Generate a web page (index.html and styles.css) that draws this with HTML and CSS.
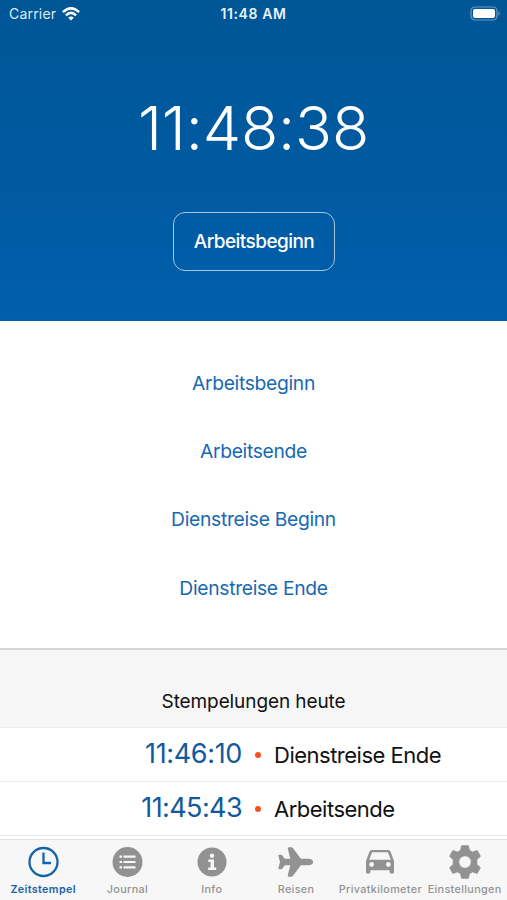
FILE: index.html
```html
<!DOCTYPE html>
<html lang="de">
<head>
<meta charset="utf-8">
<title>Zeitstempel</title>
<link rel="stylesheet" href="styles.css">
</head>
<body>
<div class="app">
  <header class="hero">
    <div class="status">
      <div class="carrier"><span>Carrier</span>
        <svg width="18" height="14" viewBox="0 0 18 14" fill="none" stroke="#fff" stroke-width="2.5"><path d="M.9 5.2Q9-2.5 17.1 5.2M3.9 8.3Q9 3.5 14.1 8.3"/><path d="M6.2 10.8Q9 8.3 11.8 10.8L9 13.6Z" fill="#fff" stroke="none"/></svg>
      </div>
      <div class="status-time">11:48 AM</div>
      <div class="battery"><svg width="31" height="15" viewBox="0 0 31 15"><rect x="1" y="1" width="26" height="13" rx="4" fill="none" stroke="#6699c4" stroke-width="1.2"/><rect x="3" y="3" width="22" height="9" rx="2" fill="#fff"/><path d="M28.500 5Q31 7.500 28.500 10Z" fill="#6699c4"/></svg></div>
    </div>
    <div class="clock">11:48:38</div>
    <button class="start">Arbeitsbeginn</button>
  </header>
  <nav class="actions">
    <a>Arbeitsbeginn</a>
    <a>Arbeitsende</a>
    <a>Dienstreise Beginn</a>
    <a>Dienstreise Ende</a>
  </nav>
  <section class="stamps">
    <h2>Stempelungen heute</h2>
    <div class="row"><time>11:46:10</time><i></i><span class="label">Dienstreise Ende</span></div>
    <div class="row"><time class="wide">11:45:43</time><i></i><span class="label">Arbeitsende</span></div>
  </section>
  <footer class="tabs">
    <div class="tab active"><svg viewBox="0 0 34 34" fill="none" stroke="currentColor" stroke-width="2.3"><circle cx="17.500" cy="17" r="14"/><path d="M17.500 7.500V18H25"/></svg><span>Zeitstempel</span></div>
    <div class="tab"><svg viewBox="0 0 34 34" fill="currentColor"><circle cx="17.500" cy="17" r="15"/><path d="M9.500 11.700h2.500M9.500 17h2.500M9.500 22.300h2.500M13.500 11.700h12M13.500 17h12M13.500 22.300h12" stroke="#f7f7f7" stroke-width="2.200"/></svg><span>Journal</span></div>
    <div class="tab"><svg viewBox="0 0 34 34" fill="currentColor"><circle cx="17" cy="17" r="14.500"/><circle cx="17" cy="10.700" r="2.200" fill="#f7f7f7"/><path d="M13.300 14.500h5.700v8h2.200v2.400h-8v-2.400h2.300v-5.500h-2.200z" fill="#f7f7f7"/></svg><span>Info</span></div>
    <div class="tab"><svg class="plane" viewBox="0 0 36 34" fill="currentColor"><path d="M12.300 13.800 9.800 3.700Q9.400 2.200 10.900 2.200h2.200q1 0 1.700.9l8.100 10.700h7.200q5 .2 5 3.200t-5 3.200h-7.200l-8.100 10.700q-.7.9-1.700.9h-2.200q-1.500 0-1.100-1.500l2.500-10.100H6.800l-2.700 3.500q-.5.6-1.200.6H1.200q-1 0-.8-1.100L2 17 .4 10.800q-.2-1.100.8-1.100h1.700q.7 0 1.200.6l2.700 3.500Z"/></svg><span>Reisen</span></div>
    <div class="tab"><svg viewBox="0 0 34 34" fill="currentColor"><path fill-rule="evenodd" d="M9 5h16q2 0 2.600 1.800L31 16v11.300q0 1.300-1.300 1.300h-1.800q-1.300 0-1.300-1.300v-2.100H7.400v2.100q0 1.300-1.300 1.300H4.300Q3 28.600 3 27.300V16L6.400 6.800Q7 5 9 5Zm.1 2.300L6.200 14.700h21.600L24.900 7.300ZM8.600 17.100a2.400 2.400 0 1 0 0 4.800 2.400 2.400 0 1 0 0-4.800Zm16.800 0a2.400 2.400 0 1 0 0 4.800 2.400 2.400 0 1 0 0-4.800Z"/></svg><span>Privatkilometer</span></div>
    <div class="tab"><svg viewBox="0 0 34 34" fill="currentColor" stroke="currentColor" stroke-linejoin="round"><path fill-rule="evenodd" d="M13.600.8h6.800l.9 4.500 3.200 1.900 4.600-1.600 3.200 5.700-3.500 3.300v4.800l3.500 3.300-3.200 5.700-4.600-1.600-3.200 1.900-.9 4.500h-6.800l-.9-4.500-3.200-1.900-4.600 1.600L1.700 22.700l3.500-3.300v-4.800L1.700 11.300l3.200-5.700 4.600 1.600 3.200-1.900ZM17 10.700a6.300 6.300 0 1 0 0 12.600 6.300 6.300 0 1 0 0-12.600Z"/></svg><span>Einstellungen</span></div>
  </footer>
</div>
</body>
</html>
```
FILE: styles.css
```css
* { box-sizing: border-box; }
body { margin: 0; background: #fff; font-family: Inter, sans-serif; color: #111; }
.app { width: 507px; height: 900px; display: flex; flex-direction: column; overflow: hidden; }
.hero { height: 321px; flex: none; background: linear-gradient(#005695, #005eab); color: #fff; display: flex; flex-direction: column; align-items: center; }
.status { width: 100%; height: 27px; display: grid; grid-template-columns: 1fr auto 1fr; align-items: center; padding: 0 6px 0 9px; font-size: 14px; }
.carrier { display: flex; align-items: center; gap: 6px; color: #dfeaf3; letter-spacing: .2px; }
.status-time { font-weight: 600; font-size: 14px; letter-spacing: .6px; margin-left: -3px; color: #e9f1f7; }
.battery { display: flex; justify-content: flex-end; }
.clock { margin-top: 64px; height: 74px; line-height: 74px; font-size: 61px; font-weight: 350; letter-spacing: -.15px; white-space: nowrap; }
.start { margin: 47px 0 0 1px; width: 162px; height: 59px; border: 1.5px solid #a6c5df; border-radius: 12px; background: none; color: #fff; font: 500 19px Inter, sans-serif; letter-spacing: -.55px; padding: 0; }
.actions { height: 327px; flex: none; padding-top: 27.500px; display: flex; flex-direction: column; align-items: center; color: #1769b2; font-size: 19.300px; letter-spacing: -.32px; }
.actions a { height: 68.400px; line-height: 68.400px; }
.stamps { flex: none; height: 191px; border-top: 2px solid #d7d7d7; }
.stamps h2 { margin: 0; height: 78px; padding-top: 39px; background: #f6f6f6; border-bottom: 1px solid #ebebeb; text-align: center; font-size: 19px; font-weight: 400; line-height: 26px; letter-spacing: -.1px; }
.row { height: 54px; display: grid; grid-template-columns: 242px 32px 1fr; align-items: center; border-bottom: 1px solid #ececec; }
.row time { color: #105a9d; font-size: 27px; letter-spacing: -.35px; text-align: right; white-space: nowrap; padding-bottom: 2px; }
.row .wide { letter-spacing: -.6px; }
.row i { width: 6px; height: 6px; border-radius: 50%; background: #f4511e; justify-self: center; }
.label { font-size: 22px; letter-spacing: -.5px; white-space: nowrap; }
.tabs { flex: 1; background: #f7f7f7; border-top: 1px solid #e4e4e4; display: grid; grid-template-columns: repeat(6, 84.300px); padding: 5px 0 0 1px; }
.tab { display: flex; flex-direction: column; align-items: center; color: #929292; font-size: 10.800px; font-weight: 500; letter-spacing: .35px; white-space: nowrap; min-width: 0; }
.tab svg { width: 34px; height: 34px; flex: none; }
.tab .plane { width: 36px; }
.tab span { line-height: 16px; margin-top: 3px; }
.active { color: #1764ab; }
.active span { font-weight: 600; }
```
